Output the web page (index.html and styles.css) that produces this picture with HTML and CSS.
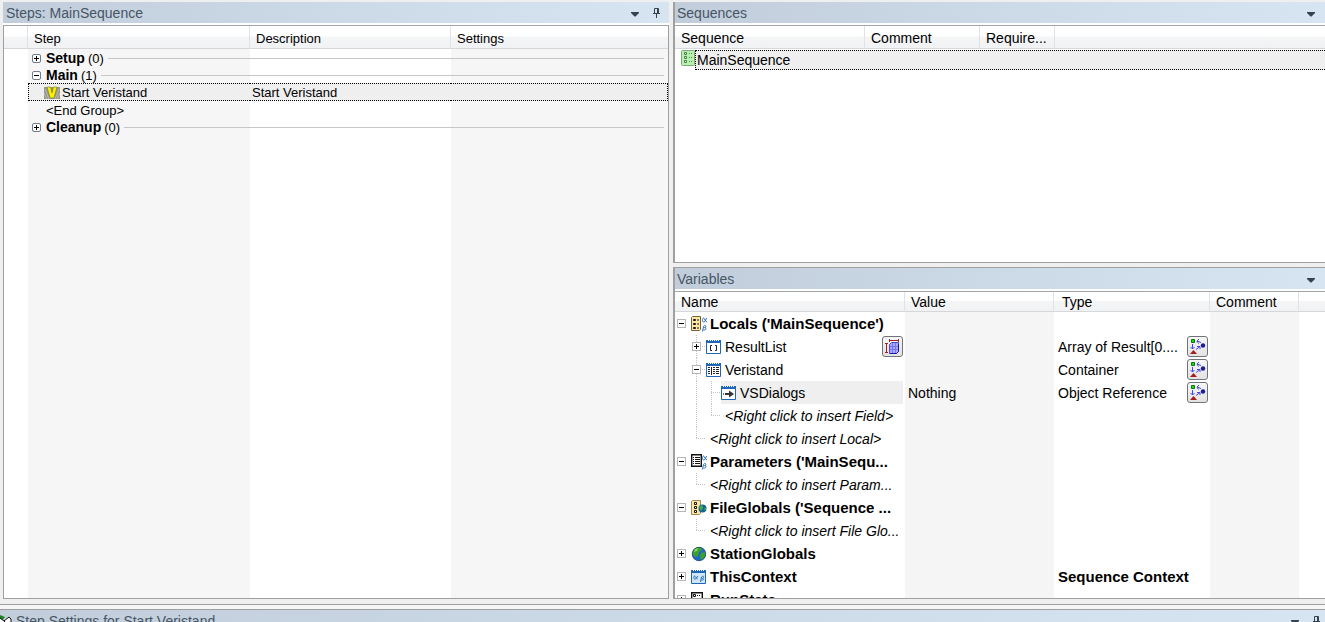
FILE: index.html
```html
<!DOCTYPE html>
<html lang="en">
<head>
<meta charset="utf-8">
<title>Sequence Editor</title>
<link rel="stylesheet" href="styles.css">
</head>
<body>
<svg class="sprite" aria-hidden="true">
  <symbol id="caret" viewBox="0 0 8 5"><path d="M0 0h8v1L4.500 4.500h-1L0 1z" fill="#36424f"/></symbol>
  <symbol id="pin" viewBox="0 0 7 10"><path d="M1.500 5.500v-5h4v5M4.500 1v4M0 5.500h7M3.500 6v4" fill="none" stroke="#36424f"/></symbol>
  <symbol id="plus" viewBox="0 0 5 5"><path d="M0 2.500h5M2.500 0v5" stroke="#000" fill="none"/></symbol>
  <symbol id="minus" viewBox="0 0 5 5"><path d="M0 2.500h5" stroke="#000" fill="none"/></symbol>
  <symbol id="veristand" viewBox="0 0 16 14"><path d="M0 1h16v12H0z" fill="#96968c"/><path d="M1 3l4 10M15 3l-4 10M0 7l3 6M16 7l-3 6" stroke="#bdbdb2"/><path d="M3 1h3.500L8 7l1.500-6H13L9.800 12H6.200z" fill="#fff200" stroke="#77771f" stroke-width=".6"/></symbol>
  <symbol id="sequence" viewBox="0 0 14 16"><rect x=".5" y=".5" width="13" height="15" rx="1" fill="#b5f2ad" stroke="#81a57d"/><path d="M3.500 2.500h2v2h-2zM3.500 6.500h2v2h-2zM3.500 10.500h2v2h-2z" fill="#d8fbd3" stroke="#537953"/><path d="M8 3.500h4M8 7.500h4M8 11.500h4" stroke="#60865d" stroke-dasharray="1 1"/></symbol>
  <symbol id="locals" viewBox="0 0 16 16"><path d="M.5 1.500l1-1h8v13l-1 1h-8z" fill="#ffe7a0" stroke="#74633b"/><path d="M2.500 3.500h2v1h-2zM2.500 7.500h2v1h-2zM2.500 11.500h2v1h-2z" fill="#fff" stroke="#111"/><path d="M6 4h2M6 8h2M6 12h2" stroke="#111"/><use href="#greek"/></symbol>
  <symbol id="greek" viewBox="0 0 16 16"><path d="M15.500 2c-1 3-2 4-3 4s-2-3 0-4c1 0 2 4 3.500 4M11.500 15.500l1-5c1-2 3-1 2 1h-1c2 0 2 3-1 2.500" fill="none" stroke="#286bb8"/></symbol>
  <symbol id="params" viewBox="0 0 16 16"><path d="M.7.700h9.600v11.600H.7z" fill="#fff" stroke="#111" stroke-width="1.400"/><path d="M2 3.500h1M4 3.500h5M2 5.500h1M4 5.500h5M2 7.500h1M4 7.500h5M2 9.500h1M4 9.500h5" stroke="#111"/><use href="#greek"/></symbol>
  <symbol id="window" viewBox="0 0 16 16"><path d="M.5 1.500h14v13H.5z" fill="#fff" stroke="#1d66b8"/><path d="M0 2.500h15" stroke="#1d66b8" stroke-width="3"/><path d="M2 1.500h12" stroke="#fff" stroke-dasharray="1 1"/></symbol>
  <symbol id="array" viewBox="0 0 16 16"><use href="#window"/><path d="M6 6.500H4.500v5H6M9 6.500h1.500v5H9" fill="none" stroke="#222"/></symbol>
  <symbol id="container" viewBox="0 0 16 16"><use href="#window"/><path d="M2 5.500h2M2 7.500h2M2 9.500h2M2 11.500h2M7 5.500h2M7 7.500h2M7 9.500h2M7 11.500h2M10 5.500h3M10 7.500h3M10 9.500h3M10 11.500h3M5.500 5v8" stroke="#222"/></symbol>
  <symbol id="object" viewBox="0 0 16 16"><use href="#window"/><path d="M4 8h4V5.500l5 3.500-5 3.500V10H4z" fill="#333"/><path d="M2.500 8v2" stroke="#777"/></symbol>
  <symbol id="globe" viewBox="0 0 16 16"><circle cx="8" cy="8" r="7" fill="#226ac0"/><path d="M2 4c3-4 8-3 8-3l1 3-3 2-1 4-3 1-3-3zM10 7l4-1 1 3-3 4-2 1-1-4z" fill="#3ca02c"/><path d="M4 3l3-1-1 3-3 1z" fill="#91da66"/><circle cx="8" cy="8" r="6.700" fill="none" stroke="#173d75" stroke-width=".6"/></symbol>
  <symbol id="fileglobals" viewBox="0 0 16 16"><path d="M.5 1.500l1-1h8v13l-1 1h-8z" fill="#ffe7a0" stroke="#9b8a5b"/><path d="M3.500 2.500h2v2h-2zM3.500 6.500h2v2h-2zM3.500 10.500h2v2h-2z" fill="#fff" stroke="#111"/><circle cx="11.500" cy="8.500" r="4" fill="#176591"/><path d="M8 7l3-2 1 3-2 3zM13 8l2 0-1 3z" fill="#42ad52"/></symbol>
  <symbol id="context" viewBox="0 0 16 16"><use href="#window"/><path d="M1 4h13v10H1z" fill="#cfe6fb"/><path d="M6.500 7c-1 3-2 3-3 3s-1-3 0-3 2 3 3 3M9.500 13l1-5c2-2 3 0 1 1.500 2 0 1 2-1 1.500" fill="none" stroke="#286bb8"/></symbol>
  <symbol id="runstate" viewBox="0 0 16 16"><path d="M.7.700h10.600v13H.7z" fill="#fff" stroke="#111" stroke-width="1.400"/><path d="M2.500 2.500h2v2h-2zM2.500 7.500h2v2h-2z" fill="none" stroke="#111"/><path d="M6 3.500h4M6 8.500h4" stroke="#111" stroke-dasharray="1 1"/></symbol>
  <symbol id="bounds" viewBox="0 0 17 17"><path d="M5.500 6.500l2-2h7v9l-2 2h-7z" fill="#a9a9ff" stroke="#4a4ae0"/><path d="M8.500 5v10M11.500 5v10M6 8.500h8M6 11.500h8" stroke="#7676f5"/><path d="M14.500 6v7.500l-2 2H6" stroke="#1717a0" fill="none"/><path d="M5 2.500h10M5.500 1v3M14.500 1v3M2.500 5v9M1 5.500h3M1 14.500h3" stroke="#a32020"/></symbol>
  <symbol id="typelink" viewBox="0 0 17 17"><path d="M2.500 1.500h3v3h-3z" fill="#18d818" stroke="#087a08"/><path d="M3.500 6v5M1.500 9l2 2 2-2M12 4.500l-4-1.500M10 1L8 3l1.500 2.500M7 11.500l4-3M8 8.500h3V11" fill="none" stroke="#4646ed"/><circle cx="14" cy="7.500" r="2.200" fill="#1b1b9c"/><path d="M1 16l3.500-4L8 16z" fill="#a61c1c"/></symbol>
  <symbol id="settings" viewBox="0 0 12 12"><path d="M0 0l5 2-3 4-2-1z" fill="#22852a"/><path d="M0 3l4 3 5-4 2 2v8H0M4 6l6 6" fill="#fff" stroke="#111"/></symbol>
</svg>

<main class="app">
  <div class="workspace">
    <section class="pane steps-pane" aria-labelledby="steps-title">
      <header class="titlebar">
        <h2 id="steps-title">Steps: MainSequence</h2>
        <button class="tool" aria-label="Steps menu"><svg class="caret"><use href="#caret"/></svg></button>
        <button class="tool" aria-label="Pin steps"><svg class="pin"><use href="#pin"/></svg></button>
      </header>
      <div class="pane-body steps-body">
        <table class="grid steps">
          <colgroup><col class="w-gutter"><col class="w-step"><col class="w-description"><col></colgroup>
          <thead><tr><th></th><th>Step</th><th>Description</th><th>Settings</th></tr></thead>
          <tbody>
            <tr><td></td><td colspan="3"><div class="group"><button class="toggle round" aria-label="Expand Setup"><svg><use href="#plus"/></svg></button><b>Setup</b><span>(0)</span><i class="rule"></i></div></td></tr>
            <tr><td></td><td colspan="3"><div class="group"><button class="toggle round" aria-label="Collapse Main"><svg><use href="#minus"/></svg></button><b>Main</b><span>(1)</span><i class="rule"></i></div></td></tr>
            <tr class="selected"><td></td><td><div class="step"><svg><use href="#veristand"/></svg>Start Veristand</div></td><td>Start Veristand</td><td></td></tr>
            <tr><td></td><td class="end-group">&lt;End Group&gt;</td><td></td><td></td></tr>
            <tr><td></td><td colspan="3"><div class="group"><button class="toggle round" aria-label="Expand Cleanup"><svg><use href="#plus"/></svg></button><b>Cleanup</b><span>(0)</span><i class="rule"></i></div></td></tr>
          </tbody>
        </table>
      </div>
    </section>

    <div class="side">
      <section class="pane sequences-pane" aria-labelledby="sequences-title">
        <header class="titlebar">
          <h2 id="sequences-title">Sequences</h2>
          <button class="tool" aria-label="Sequences menu"><svg class="caret"><use href="#caret"/></svg></button>
        </header>
        <div class="pane-body">
          <table class="grid sequences">
            <colgroup><col class="w-sequence"><col class="w-seq-comment"><col class="w-require"><col></colgroup>
            <thead><tr><th>Sequence</th><th>Comment</th><th>Require...</th><th></th></tr></thead>
            <tbody><tr><td colspan="4"><div class="sequence"><svg><use href="#sequence"/></svg><span>MainSequence</span></div></td></tr></tbody>
          </table>
        </div>
      </section>

      <section class="pane variables-pane" aria-labelledby="variables-title">
        <header class="titlebar">
          <h2 id="variables-title">Variables</h2>
          <button class="tool" aria-label="Variables menu"><svg class="caret"><use href="#caret"/></svg></button>
        </header>
        <div class="pane-body variables-body">
          <table class="grid variables">
            <colgroup><col class="w-name"><col class="w-value"><col class="w-type"><col class="w-comment"><col></colgroup>
            <thead><tr><th>Name</th><th>Value</th><th>Type</th><th>Comment</th><th></th></tr></thead>
            <tbody>
              <tr><td><div class="node"><span class="indent"><button class="toggle" aria-label="Collapse Locals"><svg><use href="#minus"/></svg></button></span><span class="label"><svg><use href="#locals"/></svg><b>Locals ('MainSequence')</b></span></div></td><td></td><td></td><td></td><td></td></tr>
              <tr><td><div class="node"><span class="indent"></span><span class="indent line mid"><button class="toggle" aria-label="Expand ResultList"><svg><use href="#plus"/></svg></button></span><span class="label"><svg><use href="#array"/></svg>ResultList</span><button class="action" aria-label="Array bounds"><svg><use href="#bounds"/></svg></button></div></td><td></td><td><div class="type"><span>Array of Result[0....</span><button class="action" aria-label="Type of ResultList"><svg><use href="#typelink"/></svg></button></div></td><td></td><td></td></tr>
              <tr><td><div class="node"><span class="indent"></span><span class="indent line mid"><button class="toggle" aria-label="Collapse Veristand"><svg><use href="#minus"/></svg></button></span><span class="label"><svg><use href="#container"/></svg>Veristand</span></div></td><td></td><td><div class="type"><span>Container</span><button class="action" aria-label="Type of Veristand"><svg><use href="#typelink"/></svg></button></div></td><td></td><td></td></tr>
              <tr><td><div class="node"><span class="indent"></span><span class="indent line"></span><span class="indent line mid"></span><span class="label current"><svg><use href="#object"/></svg>VSDialogs</span></div></td><td>Nothing</td><td><div class="type"><span>Object Reference</span><button class="action" aria-label="Type of VSDialogs"><svg><use href="#typelink"/></svg></button></div></td><td></td><td></td></tr>
              <tr><td><div class="node"><span class="indent"></span><span class="indent line"></span><span class="indent line last"></span><em>&lt;Right click to insert Field&gt;</em></div></td><td></td><td></td><td></td><td></td></tr>
              <tr><td><div class="node"><span class="indent"></span><span class="indent line last"></span><em>&lt;Right click to insert Local&gt;</em></div></td><td></td><td></td><td></td><td></td></tr>
              <tr><td><div class="node"><span class="indent"><button class="toggle" aria-label="Collapse Parameters"><svg><use href="#minus"/></svg></button></span><span class="label"><svg><use href="#params"/></svg><b>Parameters ('MainSequ...</b></span></div></td><td></td><td></td><td></td><td></td></tr>
              <tr><td><div class="node"><span class="indent"></span><span class="indent line last"></span><em>&lt;Right click to insert Param...</em></div></td><td></td><td></td><td></td><td></td></tr>
              <tr><td><div class="node"><span class="indent"><button class="toggle" aria-label="Collapse FileGlobals"><svg><use href="#minus"/></svg></button></span><span class="label"><svg><use href="#fileglobals"/></svg><b>FileGlobals ('Sequence ...</b></span></div></td><td></td><td></td><td></td><td></td></tr>
              <tr><td><div class="node"><span class="indent"></span><span class="indent line last"></span><em>&lt;Right click to insert File Glo...</em></div></td><td></td><td></td><td></td><td></td></tr>
              <tr><td><div class="node"><span class="indent"><button class="toggle" aria-label="Expand StationGlobals"><svg><use href="#plus"/></svg></button></span><span class="label"><svg><use href="#globe"/></svg><b>StationGlobals</b></span></div></td><td></td><td></td><td></td><td></td></tr>
              <tr><td><div class="node"><span class="indent"><button class="toggle" aria-label="Expand ThisContext"><svg><use href="#plus"/></svg></button></span><span class="label"><svg><use href="#context"/></svg><b>ThisContext</b></span></div></td><td></td><td><b>Sequence Context</b></td><td></td><td></td></tr>
              <tr><td><div class="node"><span class="indent"><button class="toggle" aria-label="Expand RunState"><svg><use href="#plus"/></svg></button></span><span class="label"><svg><use href="#runstate"/></svg><b>RunState</b></span></div></td><td></td><td></td><td></td><td></td></tr>
            </tbody>
          </table>
        </div>
      </section>
    </div>
  </div>

  <section class="dock" aria-labelledby="dock-title">
    <header class="titlebar">
      <svg class="dock-icon"><use href="#settings"/></svg>
      <h2 id="dock-title">Step Settings for Start Veristand</h2>
      <button class="tool" aria-label="Step settings menu"><svg class="caret"><use href="#caret"/></svg></button>
      <button class="tool" aria-label="Pin step settings"><svg class="pin"><use href="#pin"/></svg></button>
    </header>
  </section>
</main>
</body>
</html>
```
FILE: styles.css
```css
* {
  box-sizing: border-box;
}

body {
  margin: 0;
  background: #efefef;
  color: #000;
  font: 14px/16px "Liberation Sans", Arial, sans-serif;
}

.sprite {
  display: none;
}

button {
  display: flex;
  align-items: center;
  justify-content: center;
  flex: none;
  margin: 0;
  padding: 0;
  border: 0;
  background: none;
}

.app {
  display: flex;
  flex-direction: column;
  height: 100vh;
  overflow: hidden;
}

.workspace {
  display: grid;
  grid-template-columns: minmax(0, 666fr) minmax(0, 652fr);
  gap: 4px;
  flex: 1;
  min-height: 0;
  padding: 2px 0 5px 3px;
}

.side {
  display: grid;
  grid-template-rows: minmax(0, 261fr) minmax(0, 332fr);
  gap: 4px;
  min-height: 0;
}

/* Panes */

.pane {
  display: flex;
  flex-direction: column;
  min-width: 0;
  min-height: 0;
  background: #fff;
}

.side .pane {
  border-left: 2px solid #a0a0a0;
}

.variables-pane {
  border-top: 1px solid #a0a0a0;
}

.titlebar {
  display: flex;
  align-items: center;
  flex: none;
  height: 21px;
  margin-bottom: 2px;
  padding: 0 6px 0 3px;
  background: linear-gradient(90deg, #c1cddb, #d7e5f3);
}

.side .titlebar {
  padding: 0 4px 0 2px;
}

.titlebar h2 {
  flex: 1;
  margin: 0;
  color: #465564;
  font-size: 14px;
  font-weight: 400;
}

.tool {
  width: 20px;
  height: 20px;
}

.tool + .tool {
  width: 14px;
  margin-left: 4px;
}

.caret {
  width: 8px;
  height: 5px;
  margin-top: 3px;
}

.pin {
  width: 7px;
  height: 10px;
}

.pane-body {
  flex: 1;
  min-height: 0;
  overflow: hidden;
  border-top: 1px solid #a0a5ab;
  border-bottom: 1px solid #a0a0a0;
}

.steps-body {
  border-left: 1px solid #a0a0a0;
  border-right: 1px solid #a0a0a0;
  background: linear-gradient(90deg, #fff 24px, #f6f6f6 24px 246px, #fff 246px 447px, #f6f6f6 447px);
}

.variables-body {
  background: linear-gradient(90deg, #fff 230px, #f5f5f5 230px 379px, #fff 379px 535px, #f5f5f5 535px 624px, #fff 624px);
}

/* Grids */

.grid {
  width: 100%;
  table-layout: fixed;
  border-collapse: separate;
  border-spacing: 0;
  white-space: nowrap;
}

.grid th {
  height: 23px;
  padding: 2px 6px 0;
  border-right: 1px solid #e0e2e5;
  border-bottom: 1px solid #d5d7da;
  background: linear-gradient(#fff 45%, #f4f5f6 50%, #f1f2f4);
  font-size: 14px;
  font-weight: 400;
  text-align: left;
}

.steps th {
  padding-top: 3px;
  font-size: 13px;
}

.grid th:last-child {
  border-right: 0;
}

.variables th {
  height: 20px;
  padding-top: 0;
}

.variables th:nth-child(3) {
  padding-left: 8px;
}

.grid td {
  padding: 0;
}

.w-gutter { width: 24px; }
.w-step { width: 222px; }
.w-description { width: 201px; }
.w-sequence { width: 190px; }
.w-seq-comment { width: 115px; }
.w-require { width: 75px; }
.w-name { width: 230px; }
.w-value { width: 149px; }
.w-type { width: 156px; }
.w-comment { width: 89px; }

/* Steps */

.steps td {
  height: 17px;
  padding: 0 2px;
  font-size: 13px;
  line-height: 15px;
}

.steps td + td {
  padding-top: 2px;
}

.group {
  display: flex;
  align-items: center;
  padding: 0 2px;
}

.group b {
  margin: 0 3px 0 5px;
  font-size: 14px;
}

.group .rule {
  flex: 1;
  height: 1px;
  margin-left: 4px;
  background: #c6c6c6;
}

.steps .selected td + td {
  padding-top: 1px;
  border-top: 1px dotted #000;
  border-bottom: 1px dotted #000;
  background: #efefef;
}

.steps .selected td:nth-child(2) {
  border-left: 1px dotted #000;
}

.steps .selected td:last-child {
  border-right: 1px dotted #000;
}

.step {
  display: flex;
  align-items: center;
  gap: 2px;
  padding-left: 13px;
}

.step svg {
  width: 16px;
  height: 14px;
}

.steps .end-group {
  padding-left: 18px;
}

/* Sequences */

.sequence {
  display: flex;
  padding: 1px 0 0 6px;
}

.sequence svg {
  width: 14px;
  height: 16px;
}

.sequence span {
  flex: 1;
  height: 20px;
  padding: 1px;
  border: 1px dotted #000;
  border-right: 0;
  background: #efefef;
}

/* Variables */

.variables td {
  height: 23px;
}

.variables td:nth-child(2) {
  padding-left: 3px;
}

.variables td:nth-child(3) {
  padding-left: 4px;
}

.variables b {
  font-size: 15px;
}

.node {
  display: flex;
  align-items: center;
  height: 23px;
  padding: 0 2px 0 1px;
}

.indent {
  display: flex;
  align-items: center;
  flex: none;
  width: 15px;
  height: 23px;
  padding-left: 1px;
}

.line {
  background: repeating-linear-gradient(#c4c4c4 0 1px, transparent 1px 2px) 5px 0 / 1px 100% no-repeat;
}

.line.mid,
.line.last {
  background:
    repeating-linear-gradient(#c4c4c4 0 1px, transparent 1px 2px) 5px 0 / 1px 100% no-repeat,
    repeating-linear-gradient(90deg, #c4c4c4 0 1px, transparent 1px 2px) 5px 11px / 10px 1px no-repeat;
}

.line.last {
  background-size: 1px 12px, 10px 1px;
}

.toggle {
  width: 9px;
  height: 9px;
  border: 1px solid #b5b5b5;
  background: #fff;
}

.toggle.round {
  border-color: #737b85;
  border-radius: 2px;
}

.toggle svg {
  width: 5px;
  height: 5px;
}

.label {
  display: flex;
  align-items: center;
  flex: 1;
  gap: 3px;
  height: 23px;
}

.label.current {
  background: #efefef;
}

.label svg {
  flex: none;
  width: 16px;
  height: 16px;
}

.node em {
  padding-left: 4px;
}

.type {
  display: flex;
  align-items: center;
  justify-content: space-between;
  padding-right: 2px;
}

.action {
  width: 21px;
  height: 21px;
  border: 1px solid #70747a;
  border-radius: 3px;
  background: linear-gradient(#f6f6f6, #e3e3e3);
}

.action svg {
  width: 17px;
  height: 17px;
}

/* Lower dock */

.dock {
  flex: none;
  height: 18px;
  overflow: hidden;
  padding-top: 4px;
  border-top: 1px solid #a0a0a0;
  background: #f5f5f5;
}

.dock .titlebar {
  height: 23px;
  padding: 0 2px 0 0;
  border-top: 1px solid #a0a0a0;
}

.dock h2 {
  padding-left: 4px;
}

.dock-icon {
  width: 12px;
  height: 12px;
}
```
